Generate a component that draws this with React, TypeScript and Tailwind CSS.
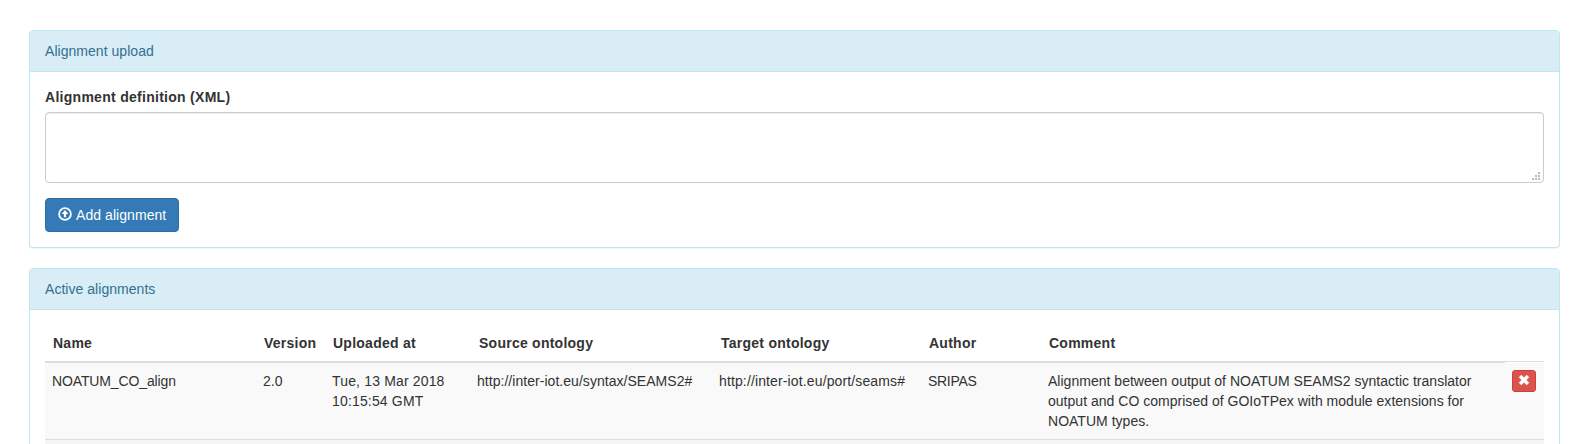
import React from "react";

type Alignment = {
  name: string;
  version: string;
  uploaded: string;
  source: string;
  target: string;
  author: string;
  comment: string;
};

const alignments: Alignment[] = [
  {
    name: "NOATUM_CO_align",
    version: "2.0",
    uploaded: "Tue, 13 Mar 2018 10:15:54 GMT",
    source: "http://inter-iot.eu/syntax/SEAMS2#",
    target: "http://inter-iot.eu/port/seams#",
    author: "SRIPAS",
    comment:
      "Alignment between output of NOATUM SEAMS2 syntactic translator output and CO comprised of GOIoTPex with module extensions for NOATUM types.",
  },
];

const COLUMNS = "grid grid-cols-[211px_69px_146px_242px_208px_120px_464px_39px]";

function UploadIcon() {
  return (
    <svg viewBox="0 0 14 14" className="-mt-0.5 h-3.5 w-3.5 shrink-0">
      <circle cx="7" cy="7" r="5.9" fill="none" stroke="white" strokeWidth="1.8" />
      <path d="M7 3.1 L10.3 7 H8.1 V10.3 H5.9 V7 H3.7 Z" fill="white" />
    </svg>
  );
}

function RemoveIcon() {
  return (
    <svg viewBox="0 0 12 12" className="-mt-0.5 h-3 w-3">
      <path
        d="M3.3 1.1 L6 3.7 L8.7 1.1 L10.9 3.3 L8.3 6 L10.9 8.7 L8.7 10.9 L6 8.3 L3.3 10.9 L1.1 8.7 L3.7 6 L1.1 3.3 Z"
        fill="white"
        stroke="white"
        strokeWidth="0.5"
        strokeLinejoin="round"
      />
    </svg>
  );
}

function ResizeGrip() {
  return (
    <svg viewBox="0 0 8 8" className="block h-2 w-2" fill="#bdbdbd" shapeRendering="crispEdges">
      <rect x="6" y="0" width="2" height="2" />
      <rect x="3" y="3" width="2" height="2" />
      <rect x="6" y="3" width="2" height="2" />
      <rect x="0" y="6" width="2" height="2" />
      <rect x="3" y="6" width="2" height="2" />
      <rect x="6" y="6" width="2" height="2" />
    </svg>
  );
}

function Panel({ title, children }: { title: string; children: React.ReactNode }) {
  return (
    <section className="rounded border border-[#bce8f1] bg-white shadow-[0_1px_1px_rgba(0,0,0,0.05)]">
      <h3 className="rounded-t-[3px] border-b border-[#bce8f1] bg-[#d9edf7] px-[15px] py-2.5 tracking-[0.04px] text-[#31708f]">
        {title}
      </h3>
      <div className="p-[15px]">{children}</div>
    </section>
  );
}

export default function App() {
  return (
    <main className="flex h-[444px] flex-col gap-5 overflow-hidden bg-white pt-[30px] pr-[33px] pl-[29px] font-['Liberation_Sans',Arial,sans-serif] text-[14px] leading-5 text-[#333]">
      <Panel title="Alignment upload">
        <label htmlFor="definition" className="mb-[5px] block font-bold tracking-[0.28px]">
          Alignment definition (XML)
        </label>
        <div className="relative mb-[15px] h-[71px]">
          <textarea
            id="definition"
            className="block h-full w-full resize-none rounded border border-[#ccc] bg-white px-3 py-1.5 shadow-[inset_0_1px_1px_rgba(0,0,0,0.075)] outline-none"
          />
          <span className="pointer-events-none absolute right-1 bottom-[3px]">
            <ResizeGrip />
          </span>
        </div>
        <button className="flex h-[34px] w-[134px] items-center gap-1 rounded border border-[#2e6da4] bg-[#337ab7] px-3 text-white">
          <UploadIcon />
          <span className="tracking-[0.06px] whitespace-nowrap">Add alignment</span>
        </button>
      </Panel>

      <Panel title="Active alignments">
        <div role="table">
          <div role="row" className={`${COLUMNS} h-[38px] font-bold tracking-[0.25px]`}>
            {["Name", "Version", "Uploaded at", "Source ontology", "Target ontology", "Author", "Comment"].map(
              (heading) => (
                <div key={heading} role="columnheader" className="border-b-2 border-[#ddd] py-2 pl-2 whitespace-nowrap">
                  {heading}
                </div>
              ),
            )}
            <div className="mb-px border-b border-[#ddd]" />
          </div>
          {alignments.map((row) => (
            <div key={row.name} role="row" className={`${COLUMNS} border-b border-[#ddd] bg-[#f9f9f9] py-2 pl-[7px]`}>
              <div className="tracking-[-0.13px]">{row.name}</div>
              <div>{row.version}</div>
              <div className="pr-6 tracking-[0.16px]">{row.uploaded}</div>
              <div className="-ml-px tracking-[0.04px]">{row.source}</div>
              <div className="-ml-px tracking-[0.13px]">{row.target}</div>
              <div className="tracking-[-0.3px]">{row.author}</div>
              <div className="pr-7 tracking-[0.02px]">{row.comment}</div>
              <div>
                <button
                  aria-label="Remove"
                  className="-mt-px flex h-[22px] w-6 items-center justify-center rounded-[3px] border border-[#d43f3a] bg-[#d9534f]"
                >
                  <RemoveIcon />
                </button>
              </div>
            </div>
          ))}
          <div className="h-10 bg-[#f5f5f5]" />
        </div>
      </Panel>
    </main>
  );
}
